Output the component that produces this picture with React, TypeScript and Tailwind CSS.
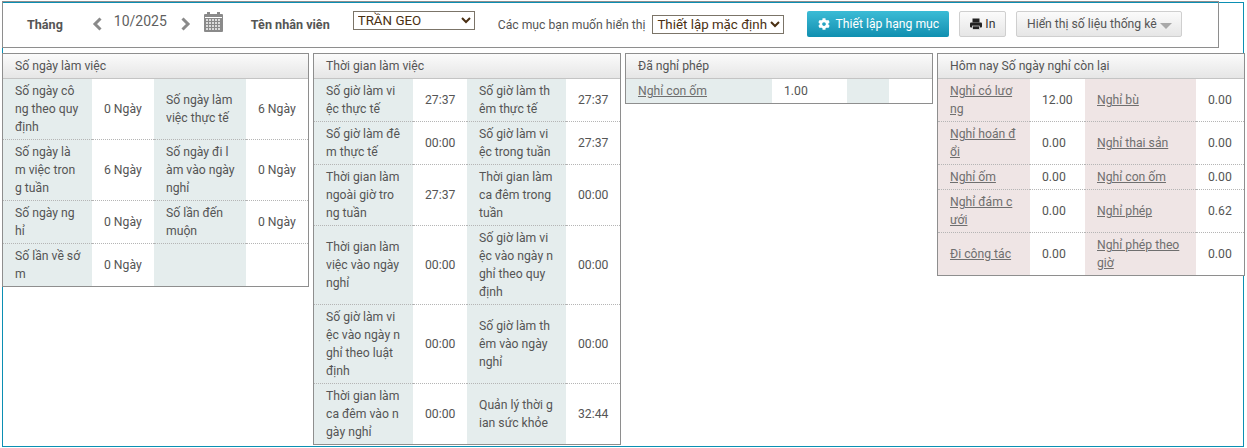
import { FaCog } from "react-icons/fa";

type Cell = { label: string; value: string };

function CalendarIcon() {
  return (
    <svg width="19" height="20" viewBox="0 0 19 20" className="ml-[13px]">
      <rect x="0" y="2" width="19" height="18" rx="1" fill="#8a8a8a" />
      <rect x="3" y="0" width="3" height="4" fill="#8a8a8a" />
      <rect x="13" y="0" width="3" height="4" fill="#8a8a8a" />
      <rect x="1" y="5" width="17" height="1" fill="#ffffff" />
      {[7, 10, 13, 16].map((y) =>
        [2, 5, 8, 11, 14].map((x) => (
          <rect key={`${x}-${y}`} x={x} y={y} width="2" height="2" fill="#dcdcdc" />
        ))
      )}
    </svg>
  );
}

function PrintIcon() {
  return (
    <svg width="12" height="12" viewBox="0 0 12 12" fill="#222222">
      <rect x="2.5" y="0.5" width="7" height="4" />
      <rect x="0" y="4.5" width="12" height="5" rx="1" />
      <rect x="2.5" y="8" width="7" height="3.5" stroke="#ffffff" strokeWidth="0.6" />
    </svg>
  );
}

function Chevron({ dir, className }: { dir: "left" | "right"; className: string }) {
  return (
    <svg width="10" height="14" viewBox="0 0 10 14" fill="none" stroke="#8a8a8a" strokeWidth="3" className={className}>
      <path d={dir === "left" ? "M8.5 1.5 L3 7 L8.5 12.5" : "M1.5 1.5 L7 7 L1.5 12.5"} />
    </svg>
  );
}

function Panel({
  title,
  widths,
  rows,
  labelBg = "bg-[#e5eded]",
  link = false,
  className,
}: {
  title: string;
  widths: number[];
  rows: Cell[][];
  labelBg?: string;
  link?: boolean;
  className: string;
}) {
  return (
    <div className={`border border-[#8e8e8e] bg-white self-start ${className}`}>
      <div className="h-[25px] px-3 leading-[24px] border-b border-[#c4c4c4] bg-gradient-to-b from-[#fbfbfb] to-[#e6e6e6] text-[#555]">
        {title}
      </div>
      <table className="w-full table-fixed border-collapse">
        <colgroup>
          {widths.map((w, i) => (
            <col key={i} style={{ width: w }} />
          ))}
        </colgroup>
        <tbody>
          {rows.map((row, i) => (
            <tr key={i} className={i < rows.length - 1 ? "border-b border-dotted border-[#b5b5b5]" : ""}>
              {row.map((c, j) => (
                <>
                  <td key={`l${j}`} className={`${labelBg} pl-3 py-[3px] whitespace-pre-line text-[#555]`}>
                    {link && c.label ? <span className="underline text-[#6f6f6f]">{c.label}</span> : c.label}
                  </td>
                  <td key={`v${j}`} className="pl-3 py-[3px] whitespace-nowrap text-[#555]">
                    {c.value}
                  </td>
                </>
              ))}
            </tr>
          ))}
        </tbody>
      </table>
    </div>
  );
}

const workDays: Cell[][] = [
  [{ label: "Số ngày cô\nng theo quy\nđịnh", value: "0 Ngày" }, { label: "Số ngày làm\nviệc thực tế", value: "6 Ngày" }],
  [{ label: "Số ngày là\nm việc tron\ng tuần", value: "6 Ngày" }, { label: "Số ngày đi l\nàm vào ngày\nnghỉ", value: "0 Ngày" }],
  [{ label: "Số ngày ng\nhỉ", value: "0 Ngày" }, { label: "Số lần đến\nmuộn", value: "0 Ngày" }],
  [{ label: "Số lần về sớ\nm", value: "0 Ngày" }, { label: "", value: "" }],
];

const workTime: Cell[][] = [
  [{ label: "Số giờ làm vi\nệc thực tế", value: "27:37" }, { label: "Số giờ làm th\nêm thực tế", value: "27:37" }],
  [{ label: "Số giờ làm đê\nm thực tế", value: "00:00" }, { label: "Số giờ làm vi\nệc trong tuần", value: "27:37" }],
  [{ label: "Thời gian làm\nngoài giờ tro\nng tuần", value: "27:37" }, { label: "Thời gian làm\nca đêm trong\ntuần", value: "00:00" }],
  [{ label: "Thời gian làm\nviệc vào ngày\nnghỉ", value: "00:00" }, { label: "Số giờ làm vi\nệc vào ngày n\nghỉ theo quy\nđịnh", value: "00:00" }],
  [{ label: "Số giờ làm vi\nệc vào ngày n\nghỉ theo luật\nđịnh", value: "00:00" }, { label: "Số giờ làm th\nêm vào ngày\nnghỉ", value: "00:00" }],
  [{ label: "Thời gian làm\nca đêm vào n\ngày nghỉ", value: "00:00" }, { label: "Quản lý thời g\nian sức khỏe", value: "32:44" }],
];

const leaveTaken: Cell[][] = [[{ label: "Nghỉ con ốm", value: "1.00" }, { label: "", value: "" }]];

const leaveLeft: Cell[][] = [
  [{ label: "Nghỉ có lươ\nng", value: "12.00" }, { label: "Nghỉ bù", value: "0.00" }],
  [{ label: "Nghỉ hoán đ\nổi", value: "0.00" }, { label: "Nghỉ thai sản", value: "0.00" }],
  [{ label: "Nghỉ ốm", value: "0.00" }, { label: "Nghỉ con ốm", value: "0.00" }],
  [{ label: "Nghỉ đám c\nưới", value: "0.00" }, { label: "Nghỉ phép", value: "0.62" }],
  [{ label: "Đi công tác", value: "0.00" }, { label: "Nghỉ phép theo\ngiờ", value: "0.00" }],
];

export default function App() {
  return (
    <div className="w-[1247px] h-[448px] overflow-hidden bg-white pl-[2px] pt-[2px] font-['Roboto',sans-serif] text-[12.2px] leading-[18px] text-[#555]">
      <div className="w-[1242px] h-[445px] border border-[#0b8fb3]">
        {/* Thanh công cụ */}
        <div className="-mt-[2px] -ml-[1px] w-[1217px] h-[47px] border border-[#8e8e8e] flex items-start">
          <span className="ml-[24px] mt-[14px] font-bold text-[12.6px] text-[#555]">Tháng</span>
          <Chevron dir="left" className="ml-[29px] mt-[15px]" />
          <span className="ml-[12px] mt-[10px] text-[14px] text-[#5f5f5f]">10/2025</span>
          <Chevron dir="right" className="ml-[14px] mt-[15px]" />
          <div className="mt-[10px]"><CalendarIcon /></div>
          <span className="ml-[28px] mt-[14px] font-bold text-[12.6px] text-[#555]">Tên nhân viên</span>
          <select className="ml-[23px] mt-[9px] w-[122px] h-[19px] border border-[#7b7468] bg-white text-[13.33px] leading-none text-[#4a2f12] rounded-none">
            <option>TRẦN GEO</option>
          </select>
          <span className="ml-[23px] mt-[14px] text-[#555]">Các mục bạn muốn hiển thị</span>
          <select className="ml-[7px] mt-[13px] w-[132px] h-[19px] border border-[#7b7468] bg-white text-[13.33px] leading-none text-[#4a2f12] rounded-none">
            <option>Thiết lập mặc định</option>
          </select>
          <button className="ml-[23px] mt-[9px] w-[142px] h-[26px] flex items-center justify-center gap-[6px] rounded-[2px] bg-gradient-to-b from-[#3bbcd6] to-[#0e8fb0] text-white">
            <FaCog size={12} />
            Thiết lập hạng mục
          </button>
          <button className="ml-[10px] mt-[9px] w-[47px] h-[26px] flex items-center justify-center gap-[3px] rounded-[2px] border border-[#cfcfcf] bg-gradient-to-b from-[#fbfbfb] to-[#e6e6e6] text-[#333]">
            <PrintIcon />
            In
          </button>
          <button className="ml-[10px] mt-[9px] w-[166px] h-[26px] flex items-center justify-center gap-[3px] rounded-[2px] border border-[#cfcfcf] bg-gradient-to-b from-[#fbfbfb] to-[#e6e6e6] text-[#555]">
            Hiển thị số liệu thống kê
            <span className="mt-[3px] w-0 h-0 border-x-[6px] border-x-transparent border-t-[6px] border-t-[#a8a8a8]" />
          </button>
        </div>

        {/* Các bảng số liệu */}
        <div className="-ml-[1px] mt-[5px] flex gap-[4px]">
          <Panel className="w-[307px]" title="Số ngày làm việc" widths={[89, 62, 92, 62]} rows={workDays} />
          <Panel className="w-[308px]" title="Thời gian làm việc" widths={[99, 54, 99, 54]} rows={workTime} />
          <Panel className="w-[308px]" title="Đã nghỉ phép" widths={[146, 75, 42, 43]} rows={leaveTaken} link />
          <Panel className="w-[308px]" title="Hôm nay Số ngày nghỉ còn lại" widths={[92, 55, 111, 48]} rows={leaveLeft} labelBg="bg-[#efe5e5]" link />
        </div>
      </div>
    </div>
  );
}
